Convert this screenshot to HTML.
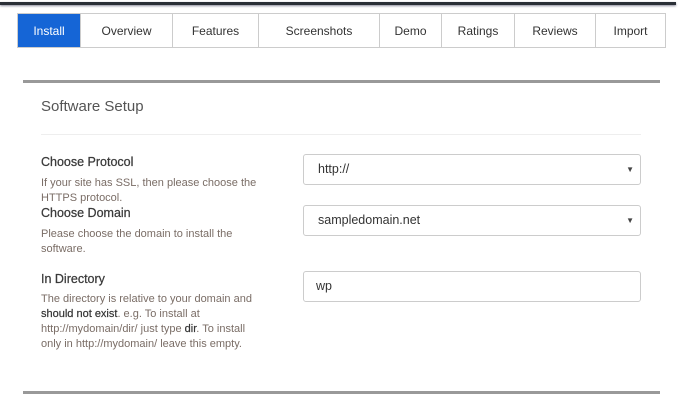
<!DOCTYPE html>
<html><head><style>
*{margin:0;padding:0;box-sizing:border-box}
body{width:681px;height:405px;background:#fff;position:relative;font-family:"Liberation Sans",sans-serif;overflow:hidden}
.topline{position:absolute;left:0;top:2px;width:676px;height:3px;background:#2a2f36;box-shadow:0 1px 2px #889}
.tabs{position:absolute;left:17px;top:13px;height:35px;display:flex;border:1px solid #ccc}
.tab{height:33px;line-height:35px;text-align:center;font-size:12px;color:#333;border-left:1px solid #ccc}
.tab:first-child{border-left:none;background:#1565d6;color:#fff}
.bar{position:absolute;left:23px;width:637px;height:3px;background:#999}
.title{position:absolute;left:41px;top:98px;font-size:15px;color:#555}
.sep{position:absolute;left:41px;top:134px;width:600px;height:1px;background:#eee}
.lbl{position:absolute;left:41px;font-size:12.5px;color:#3a3a3a;-webkit-text-stroke:0.25px #3a3a3a}
.desc{position:absolute;left:41px;font-size:11px;color:#7a6d66;line-height:15px;width:226px}
.desc b{color:#333;font-weight:normal;-webkit-text-stroke:0.2px #333}
.field{position:absolute;left:303px;width:338px;height:31px;border:1px solid #ccc;border-radius:3px;font-size:12.5px;color:#333;line-height:29px;padding-left:14px}
.field .arr{position:absolute;right:6px;top:0;font-size:8px;color:#444}
</style></head><body>
<div class="topline"></div>
<div class="tabs">
<div class="tab" style="width:62px">Install</div>
<div class="tab" style="width:92px">Overview</div>
<div class="tab" style="width:86px">Features</div>
<div class="tab" style="width:121px">Screenshots</div>
<div class="tab" style="width:62px">Demo</div>
<div class="tab" style="width:73px">Ratings</div>
<div class="tab" style="width:81px">Reviews</div>
<div class="tab" style="width:70px">Import</div>
</div>
<div class="bar" style="top:80px"></div>
<div class="title">Software Setup</div>
<div class="sep"></div>
<div class="lbl" style="top:155px">Choose Protocol</div>
<div class="desc" style="top:176px">If your site has SSL, then please choose the HTTPS protocol.</div>
<div class="lbl" style="top:206px">Choose Domain</div>
<div class="desc" style="top:227px">Please choose the domain to install the software.</div>
<div class="lbl" style="top:272px">In Directory</div>
<div class="desc" style="top:292px">The directory is relative to your domain and <b>should not exist</b>. e.g. To install at http://mydomain/dir/ just type <b>dir</b>. To install only in http://mydomain/ leave this empty.</div>
<div class="field" style="top:154px">http://<span class="arr">▼</span></div>
<div class="field" style="top:205px">sampledomain.net<span class="arr">▼</span></div>
<div class="field" style="top:271px;padding-left:12px">wp</div>
<div class="bar" style="top:391px"></div>
</body></html>
